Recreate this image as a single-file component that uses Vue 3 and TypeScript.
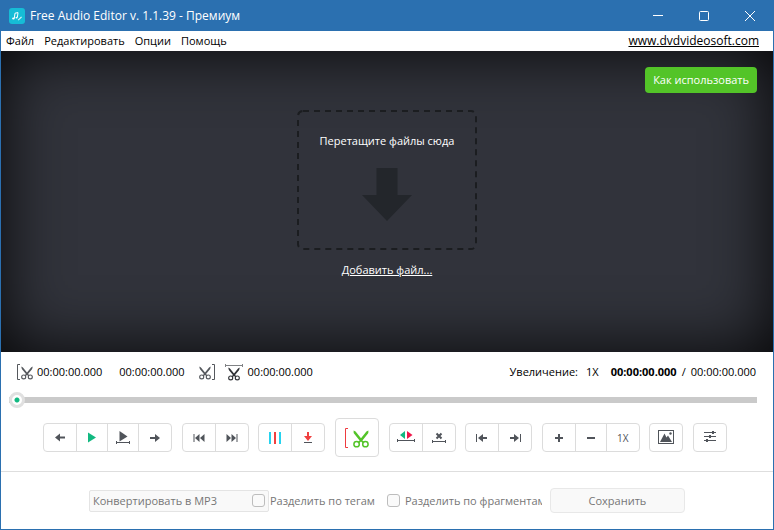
<script setup lang="ts">
import { ref } from 'vue'

interface ToolButton {
  id: string
  label: string
}

const menus: string[] = ['Файл', 'Редактировать', 'Опции', 'Помощь']

const groups: ToolButton[][] = [
  [
    { id: 'back', label: 'Назад' },
    { id: 'play', label: 'Воспроизвести' },
    { id: 'play-range', label: 'Воспроизвести фрагмент' },
    { id: 'forward', label: 'Вперёд' },
  ],
  [
    { id: 'prev', label: 'В начало' },
    { id: 'next', label: 'В конец' },
  ],
  [
    { id: 'split', label: 'Разделить' },
    { id: 'marker', label: 'Метка' },
  ],
  [{ id: 'cut', label: 'Вырезать' }],
  [
    { id: 'invert', label: 'Обратить выделение' },
    { id: 'clear', label: 'Снять выделение' },
  ],
  [
    { id: 'to-start', label: 'К началу фрагмента' },
    { id: 'to-end', label: 'К концу фрагмента' },
  ],
  [
    { id: 'zoom-in', label: 'Увеличить' },
    { id: 'zoom-out', label: 'Уменьшить' },
    { id: 'zoom-reset', label: '1X' },
  ],
  [{ id: 'picture', label: 'Обложка' }],
  [{ id: 'settings', label: 'Настройки' }],
]

const position = ref(0)
const splitTags = ref(false)
const splitParts = ref(false)
</script>

<template>
  <div class="window">
    <svg class="defs" width="0" height="0" aria-hidden="true">
      <symbol id="scissors" viewBox="0 0 16 18">
        <path d="M0.6 0.4L2.6 1.6L8 8.2L13.400 1.600L15.400 0.400Q15.800 2.600 14.400 4.200L9.400 10.400L11.400 12.400L10 13.200L8 11.600L6 13.200L4.600 12.400L6.600 10.400L1.600 4.200Q0.200 2.600 0.600 0.400Z" fill="currentColor" />
        <ellipse cx="3.6" cy="14.2" rx="2.7" ry="2.6" fill="none" stroke="currentColor" stroke-width="1.5" />
        <ellipse cx="12.4" cy="14.2" rx="2.7" ry="2.6" fill="none" stroke="currentColor" stroke-width="1.5" />
      </symbol>
    </svg>

    <header class="titlebar">
      <svg class="logo" width="16" height="16" viewBox="0 0 16 16" aria-hidden="true">
        <rect width="16" height="16" rx="3" fill="#16bcd6" />
        <path d="M5.3 10.3L6 5.2L9 4.6L8.4 9.2" fill="none" stroke="#fff" stroke-width="1" />
        <ellipse cx="4.4" cy="10.6" rx="1.3" ry="1" fill="#fff" />
        <ellipse cx="7.6" cy="9.6" rx="1.1" ry="0.9" fill="#fff" />
        <path d="M9.2 12.2L12.6 8.8" stroke="#d8f5f9" stroke-width="1.2" />
      </svg>
      <h1>Free Audio Editor v. 1.1.39 - Премиум</h1>
      <div class="caption">
        <button type="button" aria-label="Свернуть">
          <svg width="12" height="12" viewBox="0 0 12 12"><path d="M1 5.5H11" /></svg>
        </button>
        <button type="button" aria-label="Развернуть">
          <svg width="12" height="12" viewBox="0 0 12 12"><rect x="1.5" y="1.5" width="9" height="9" rx="1" /></svg>
        </button>
        <button type="button" aria-label="Закрыть">
          <svg width="12" height="12" viewBox="0 0 12 12"><path d="M1 1L11 11M11 1L1 11" /></svg>
        </button>
      </div>
    </header>

    <nav class="menubar">
      <button v-for="m in menus" :key="m" type="button">{{ m }}</button>
      <a class="site" href="#">www.dvdvideosoft.com</a>
    </nav>

    <main class="stage">
      <div class="stage-top">
        <button class="howto" type="button">Как использовать</button>
      </div>
      <div class="drop">
        <svg class="dashes" aria-hidden="true">
          <rect class="dash" width="100%" height="100%" rx="5" />
        </svg>
        <p>Перетащите файлы сюда</p>
        <svg width="50" height="53" viewBox="0 0 50 53" aria-hidden="true">
          <path d="M14.5 0H35.5V27H50L25 53L0 27H14.5Z" fill="#23262b" />
        </svg>
      </div>
      <a class="add" href="#">Добавить файл...</a>
    </main>

    <section class="info">
      <span class="mark">
        <svg width="16" height="18" viewBox="0 0 16 18" class="soft">
          <path d="M3 1.5H0.5V16.5H3" fill="none" stroke="currentColor" />
          <use href="#scissors" x="4" y="3" width="12" height="14" />
        </svg>
        <span>00:00:00.000</span>
      </span>
      <span class="mark end">
        <span>00:00:00.000</span>
        <svg width="16" height="18" viewBox="0 0 16 18" class="soft">
          <path d="M13 1.5H15.5V16.5H13" fill="none" stroke="currentColor" />
          <use href="#scissors" x="0" y="3" width="12" height="14" />
        </svg>
      </span>
      <span class="mark length">
        <svg width="18" height="18" viewBox="0 0 18 18">
          <path d="M0.5 1V4M17.5 1V4M1 2.5H17" fill="none" stroke="#808285" />
          <use href="#scissors" x="3" y="4" width="12" height="14" />
        </svg>
        <span>00:00:00.000</span>
      </span>
      <span class="zoom"><span>Увеличение:</span><span>1X</span></span>
      <span class="clock"><b>00:00:00.000</b><i>/</i><span>00:00:00.000</span></span>
    </section>

    <div class="seek">
      <input v-model.number="position" type="range" min="0" max="100" aria-label="Позиция" />
    </div>

    <div class="toolbar">
      <div v-for="(g, i) in groups" :key="i" class="group" :class="{ big: g[0].id === 'cut' }">
        <button v-for="b in g" :key="b.id" type="button" :aria-label="b.label">
          <span v-if="b.id === 'zoom-reset'" class="reset">1X</span>
          <svg v-else-if="b.id === 'cut'" width="26" height="22" viewBox="0 0 26 22">
            <path d="M4 1.5H1.5V20.5H4" fill="none" stroke="#ee3b3f" />
            <use href="#scissors" x="9" y="3" width="16" height="18" class="green" />
          </svg>
          <svg v-else width="20" height="20" viewBox="0 0 20 20">
            <path v-if="b.id === 'back'" d="M5 9.5L10 5.5V8.5H15V10.5H10V13.5Z" />
            <path v-else-if="b.id === 'play'" d="M6 4.5L14 9.5L6 14.5Z" fill="#12b981" />
            <template v-else-if="b.id === 'play-range'">
              <path d="M6.5 3L14.5 8.5L6.5 13.5Z" />
              <path d="M3 13H4V14H16V13H17V16H16V15H4V16H3Z" />
            </template>
            <path v-else-if="b.id === 'forward'" d="M15 10L10 6V9H5V11H10V14Z" />
            <path v-else-if="b.id === 'prev'" d="M4.5 6H5.5V14H4.5ZM10.5 6V14L6 10ZM15.5 6V14L11 10Z" />
            <path v-else-if="b.id === 'next'" d="M14.5 6H15.5V14H14.5ZM9.5 6V14L14 10ZM4.5 6V14L9 10Z" />
            <template v-else-if="b.id === 'split'">
              <path d="M4 4H6V16H4ZM14 4H16V16H14Z" fill="#26d3ef" />
              <path d="M9 4H11V16H9Z" fill="#f04040" />
            </template>
            <template v-else-if="b.id === 'marker'">
              <path d="M9 4H11V8H14L10 13L6 8H9Z" fill="#f04040" />
              <path d="M6 14H14V15H6Z" />
            </template>
            <template v-else-if="b.id === 'invert'">
              <path d="M9 3V11L4 7Z" fill="#12b981" />
              <path d="M11 3V11L16.500 7Z" fill="#f0174a" />
              <path d="M1 11H2V12H18V11H19V14H18V13H2V14H1Z" />
            </template>
            <template v-else-if="b.id === 'clear'">
              <path d="M7.500 5.500L12.500 10.500M12.500 5.500L7.500 10.500" stroke="#50545a" stroke-width="2" />
              <path d="M3 12H4V13H16V12H17V15H16V14H4V15H3Z" />
            </template>
            <path v-else-if="b.id === 'to-start'" d="M4 6H5V14H4ZM6 10L11 6V9H15V11H11V14Z" />
            <path v-else-if="b.id === 'to-end'" d="M15 6H16V14H15ZM14 10L9 6V9H5V11H9V14Z" />
            <path v-else-if="b.id === 'zoom-in'" d="M9 6H11V9H14V11H11V14H9V11H6V9H9Z" />
            <path v-else-if="b.id === 'zoom-out'" d="M6 9H14V11H6Z" />
            <template v-else-if="b.id === 'picture'">
              <rect x="2.500" y="2.500" width="15" height="13" fill="none" stroke="#50545a" />
              <path d="M4 14L8.500 5.500L10.500 9.500L12 7.500L16 14Z" />
              <circle cx="14.500" cy="5.500" r="1.200" />
            </template>
            <template v-else-if="b.id === 'settings'">
              <path d="M4 4H16V5H4ZM4 8H16V9H4ZM4 12H16V13H4Z" />
              <path d="M12 3H14V6H12ZM9 7H11V10H9ZM6 11H8V14H6Z" />
            </template>
          </svg>
        </button>
      </div>
    </div>

    <footer class="footer">
      <select disabled aria-label="Формат">
        <option>Конвертировать в MP3</option>
      </select>
      <label class="check tags"><input v-model="splitTags" type="checkbox" disabled /><span>Разделить по тегам</span></label>
      <label class="check parts"><input v-model="splitParts" type="checkbox" disabled /><span>Разделить по фрагментам</span></label>
      <button type="button" disabled>Сохранить</button>
    </footer>
  </div>
</template>

<style>
body {
  margin: 0;
}
</style>

<style scoped>
.window {
  box-sizing: border-box;
  min-height: 100vh;
  display: flex;
  flex-direction: column;
  border: 1px solid #2b70b0;
  border-top: 0;
  background: #fff;
  color: #000;
  font: 11px/16px "Open Sans", "Noto Sans", sans-serif;
}
.defs {
  position: absolute;
}
button,
select,
input {
  font: inherit;
  color: inherit;
  margin: 0;
  padding: 0;
}
button {
  border: 0;
  background: none;
}
svg {
  display: block;
  flex: none;
}
a {
  color: inherit;
}
.titlebar {
  height: 31px;
  display: flex;
  align-items: center;
  padding-left: 8px;
  background: #2b70b0;
  color: #fff;
}
.titlebar h1 {
  margin: 0 0 0 5px;
  font-size: 12px;
  font-weight: 400;
}
.caption {
  margin-left: auto;
  display: flex;
}
.caption button {
  width: 46px;
  height: 31px;
  display: grid;
  place-items: center;
}
.caption svg {
  fill: none;
  stroke: #fff;
}
.menubar {
  height: 20px;
  display: flex;
  align-items: center;
  gap: 10px;
  padding: 0 14px 0 5px;
}
.site {
  margin-left: auto;
  font-size: 12px;
}
.stage {
  flex: 1;
  display: flex;
  flex-direction: column;
  align-items: center;
  background: #31333b;
  color: #fff;
  box-shadow: inset 0 0 64px rgba(0, 0, 0, 0.9);
}
.stage-top {
  align-self: stretch;
  display: flex;
  justify-content: flex-end;
  padding: 16px 16px 17px;
}
.howto {
  height: 26px;
  padding: 0 8px;
  border-radius: 4px;
  background: #53c428;
}
.drop {
  position: relative;
  box-sizing: border-box;
  width: 180px;
  height: 140px;
  display: flex;
  flex-direction: column;
  align-items: center;
  padding-top: 23px;
}
.drop p {
  margin: 0 0 19px;
  white-space: nowrap;
}
.dashes {
  position: absolute;
  inset: 1px;
  width: calc(100% - 2px);
  height: calc(100% - 2px);
  overflow: visible;
}
.dash {
  fill: none;
  stroke: #1b1d20;
  stroke-width: 2px;
  stroke-dasharray: 6 5;
}
.add {
  margin-top: 12px;
}
.info {
  height: 40px;
  display: flex;
  align-items: center;
  padding: 0 17px 0 16px;
}
.info .mark,
.info .zoom,
.info .clock {
  display: flex;
  align-items: center;
}
.mark {
  gap: 4px;
  color: #303236;
}
.mark span {
  color: #000;
}
.soft {
  color: #55585d;
}
.mark.end {
  gap: 14px;
  margin-left: 17px;
}
.mark.length {
  gap: 5px;
  margin-left: 10px;
}
.zoom {
  gap: 8px;
  margin-left: auto;
}
.clock {
  gap: 5px;
  margin-left: 12px;
}
.clock i {
  font-style: normal;
}
.seek {
  height: 16px;
  display: flex;
  padding: 0 16px 0 8px;
}
.seek input {
  flex: 1;
  height: 16px;
  appearance: none;
  background: linear-gradient(#cacaca, #cacaca) center / 100% 6px no-repeat;
  border-radius: 3px;
}
.seek input::-webkit-slider-thumb {
  appearance: none;
  box-sizing: border-box;
  width: 16px;
  height: 16px;
  border: 3px solid #e0e0e0;
  border-radius: 50%;
  background: radial-gradient(circle, #12b981 2px, #fff 3px);
}
.toolbar {
  box-sizing: border-box;
  height: 64px;
  display: flex;
  align-items: center;
  justify-content: space-between;
  padding: 0 46px 4px 42px;
  border-bottom: 1px solid #dedede;
}
.group {
  display: flex;
  border: 1px solid #dcdcdc;
  border-radius: 4px;
}
.group button {
  box-sizing: border-box;
  width: 31px;
  height: 27px;
  display: grid;
  place-items: center;
  border-right: 1px solid #dcdcdc;
  fill: #50545a;
  color: #50545a;
}
.group button:first-child {
  width: 33px;
}
.group button:last-child {
  width: 32px;
  border-right: 0;
}
.group.big button {
  width: 42px;
  height: 37px;
}
.green {
  color: #53c428;
}
.reset {
  font-size: 10px;
}
.footer {
  height: 57px;
  display: flex;
  align-items: center;
  padding: 0 88px;
  color: #767676;
}
.footer select {
  box-sizing: border-box;
  flex: none;
  width: 180px;
  height: 22px;
  margin-right: -17px;
  padding: 0 3px;
  appearance: none;
  border: 1px solid #e4e4e4;
  border-radius: 2px;
  background: #f9f9f9;
  opacity: 1;
}
.check {
  position: relative;
  flex: none;
  display: flex;
  align-items: center;
  gap: 5px;
  white-space: nowrap;
}
.check input {
  appearance: none;
  box-sizing: border-box;
  flex: none;
  width: 13px;
  height: 13px;
  border: 1px solid #bdbdbd;
  border-radius: 3px;
  background: #fafafa;
}
.check.tags {
  margin-right: 12px;
}
.check.parts {
  width: 155px;
}
.check.parts span {
  overflow: hidden;
}
.footer button {
  box-sizing: border-box;
  flex: none;
  width: 135px;
  height: 25px;
  margin-left: 8px;
  border: 1px solid #e8e8e8;
  border-radius: 4px;
  background: #f9f9f9;
}
</style>
